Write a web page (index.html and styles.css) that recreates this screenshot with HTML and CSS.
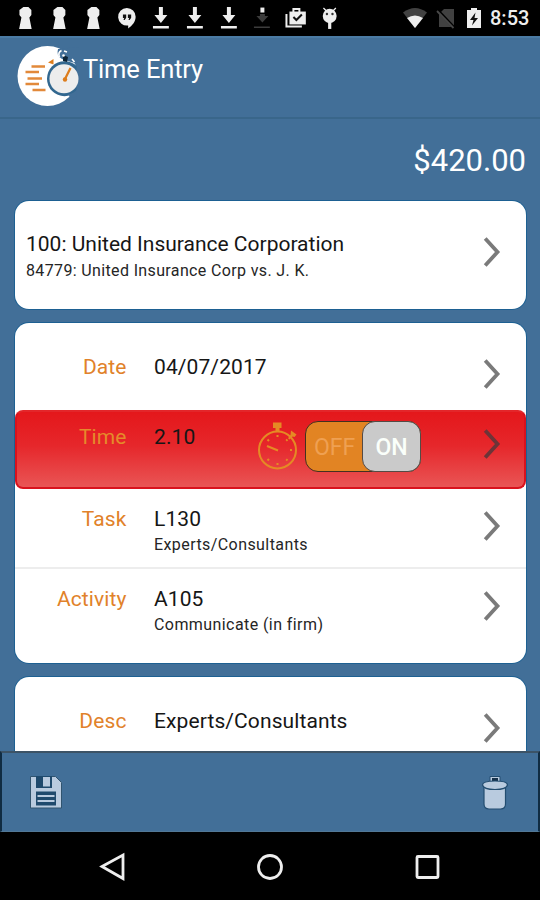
FILE: index.html
```
<!DOCTYPE html>
<html lang="en">
<head>
<meta charset="utf-8">
<title>Time Entry</title>
<link rel="stylesheet" href="styles.css">
</head>
<body>
<svg width="0" height="0" class="defs">
  <defs>
    <symbol id="keyhole" viewBox="0 0 34 36"><path fill="#eee" d="M14.500 7h5l3 3v5l-2 2.500 2.300 11.500h-12.600l2.300-11.500-2-2.500v-5z"/></symbol>
    <symbol id="download" viewBox="0 0 34 36"><path fill="#eee" d="M15 7h4v8h4.500L17 23l-6.500-8H15zM9 26h16v2.500H9z"/></symbol>
    <symbol id="chevron" viewBox="0 0 18 32"><path d="M2.200 2.500 14.500 16 2.200 29.500" fill="none" stroke="currentColor" stroke-width="3.800"/></symbol>
  </defs>
</svg>
<div class="screen">
  <div class="status">
    <div class="notices">
      <svg><use href="#keyhole"/></svg>
      <svg><use href="#keyhole"/></svg>
      <svg><use href="#keyhole"/></svg>
      <svg viewBox="0 0 34 36"><path fill="#eee" d="M17 8a8.800 8.800 0 0 1 8.800 8.800c0 5-3.500 9-7.500 11.700v-3A8.800 8.800 0 1 1 17 8z"/><path fill="#111" d="M13 14.500h3.300v3.300L14.800 20h-1.200l.7-2H13zM18 14.500h3.300v3.300L19.800 20h-1.200l.7-2H18z"/></svg>
      <svg><use href="#download"/></svg>
      <svg><use href="#download"/></svg>
      <svg><use href="#download"/></svg>
      <svg viewBox="0 0 34 36"><path fill="#3c3c3c" d="M14 14h5v2h3.500L16.500 22.500 10.500 16H14zM8 26.500h16V28H8z"/><path fill="#eee" d="M14.500 7.500h4v5h-4z"/></svg>
      <svg viewBox="0 0 34 36"><path fill="none" stroke="#eee" stroke-width="2" d="M7.500 14v12.500H23M14.500 12V9h6v3"/><path fill="#eee" d="M10.500 11.500h16.500v13H10.500z"/><path fill="none" stroke="#111" stroke-width="2" d="m14.500 17 3 3 5.500-5.500"/></svg>
      <svg viewBox="0 0 34 36"><path fill="none" stroke="#eee" stroke-width="1.300" d="m10.500 8 3 3M23 8l-3 3"/><ellipse cx="16.800" cy="16" rx="7" ry="7.200" fill="#eee"/><path fill="#eee" d="M15.200 22h3.200v7h-3.200z"/><circle cx="14" cy="14" r="1.200" fill="#333"/><circle cx="19.600" cy="14" r="1.200" fill="#333"/></svg>
    </div>
    <div class="system">
      <svg class="wifi" viewBox="0 0 26 22"><path fill="#414141" d="M1 5.500q12-9 24 0L13 21z"/><path fill="#eee" d="M5 11q8-5 16 0l-8 10z"/></svg>
      <svg class="sim" viewBox="0 0 20 22"><path fill="#414141" d="M8 2h10v18H3V7z"/><path d="M1 2.500 18 20.500" stroke="#000" stroke-width="3"/><path d="M1 4 17.500 21" stroke="#484848" stroke-width="1.800"/></svg>
      <svg class="battery" viewBox="0 0 14 22"><path fill="#eee" d="M4 1h6v2h4v18H0V3h4z"/><path fill="#111" d="M8.500 5.500 3 13h3.500L5 18.500l6-7.500H7.500z"/></svg>
      <span class="clock">8:53</span>
    </div>
  </div>

  <header class="header">
    <svg class="logo" viewBox="0 0 62 62">
      <circle cx="30.500" cy="31" r="30" fill="#fff"/>
      <path d="M41 4q-2 7 4 10l9 3 8 2V2z" fill="#426f98"/>
      <circle cx="47.500" cy="33.700" r="17.500" fill="#32678f"/>
      <path d="M51 49.500q6-1 10-6l1 8-8 1z" fill="#426f98"/>
      <path d="M62 14v40h-2.500V18z" fill="#426f98"/>
      <path d="M44.500 5.500q-4 2-2 6.500M50 7l-3-1M55 14l2.500 3" stroke="#fff" stroke-width="1.600" fill="none"/>
      <path d="m46 10 5 2-1 5-4-1z" fill="#0b2336"/>
      <circle cx="46.500" cy="10.500" r="1.300" fill="#fff"/>
      <circle cx="47" cy="33.700" r="14.500" fill="#ededed"/>
      <path d="m53.500 23-5.500 11" stroke="#dd7d1c" stroke-width="2.200"/><circle cx="48" cy="34.500" r="2.200" fill="#dd7d1c"/>
      <path d="m31 17.500 5.500-3.500v5.500z" fill="#dd7d1c"/>
      <path d="M14.500 21.500H28M8.500 27H22M10.500 33.500H25M8.500 39H22M15.500 45H28.500" stroke="#e2893a" stroke-width="2.400"/>
    </svg>
    <h1>Time Entry</h1>
  </header>

  <main class="content">
    <div class="total">$420.00</div>
    <section class="card matter">
      <div class="text"><div class="main client">100: United Insurance Corporation</div><div class="sub case">84779: United Insurance Corp vs. J. K.</div></div>
      <svg class="chev"><use href="#chevron"/></svg>
    </section>

    <section class="card details">
      <div class="row date"><div class="label">Date</div><div class="text"><div class="main">04/07/2017</div></div><svg class="chev"><use href="#chevron"/></svg></div>
      <div class="row time">
        <div class="label">Time</div><div class="text"><div class="main">2.10</div></div>
        <svg class="stopwatch" viewBox="0 0 42 50">
          <g fill="none" stroke="#e58a24" stroke-width="2"><circle cx="20.500" cy="29" r="18.500"/><path d="m10 25 11 4.500M20.500 14v2M30.500 18.500l-1.300 1.300M35 29h-2M30.500 39.500l-1.300-1.300M20.500 44v-2M10.500 39.500l1.500-1.500M10.500 18.500l1.500 1.500"/></g>
          <path fill="#e58a24" d="M16 1.500h8.500V7h-2v4h-4V7H16zM34 9.500l5.500 4-2 2.500-2-.5-3 3-1.500-1.200 2.500-3.300z"/>
        </svg>
        <div class="switch"><span class="off">OFF</span><span class="on">ON</span></div>
        <svg class="chev"><use href="#chevron"/></svg>
      </div>
      <div class="row task"><div class="label">Task</div><div class="text"><div class="main">L130</div><div class="sub">Experts/Consultants</div></div><svg class="chev"><use href="#chevron"/></svg></div>
      <div class="row activity"><div class="label">Activity</div><div class="text"><div class="main">A105</div><div class="sub">Communicate (in firm)</div></div><svg class="chev"><use href="#chevron"/></svg></div>
    </section>

    <section class="card desc">
      <div class="row"><div class="label">Desc</div><div class="text"><div class="main">Experts/Consultants</div></div><svg class="chev"><use href="#chevron"/></svg></div>
    </section>
  </main>

  <footer class="toolbar">
    <svg class="save" viewBox="0 0 34 36">
      <path d="M1.500 1.500h25l6 6v25.500h-31z" fill="#b9cbdf" stroke="#31546f"/>
      <path d="M7 1h16v12H7z" fill="#1f4a6d"/><path d="M14 2h7v9.500h-7z" fill="#b9cbdf"/>
      <path d="M7 16.500h20v14H7z" fill="#1f4a6d"/><path d="M8.500 21h17M8.500 26h17" stroke="#b9cbdf" stroke-width="2"/>
    </svg>
    <svg class="trash" viewBox="0 0 28 36">
      <path d="M3 12h21.500v17q0 5-5 5h-11.500q-5 0-5-5z" fill="#b9cbdf" stroke="#234d70" stroke-width="1.200"/>
      <path d="M9 6V1.500h10V6" fill="#b9cbdf" stroke="#234d70"/><path d="M11 3h6v3h-6z" fill="#17324b"/>
      <path d="M1.500 10q0-4 12.500-4t12.500 4q-1 4.500-12.500 4.500T1.500 10z" fill="#b9cbdf" stroke="#234d70" stroke-width="1.200"/>
    </svg>
  </footer>
  <nav class="nav">
    <svg viewBox="0 0 30 30"><path d="M4 14.500 25 3v23.500z"/></svg>
    <svg viewBox="0 0 30 30"><circle cx="15" cy="15" r="11.500"/></svg>
    <svg viewBox="0 0 30 30"><rect x="5" y="4.500" width="21" height="21" rx="1"/></svg>
  </nav>
</div>
</body>
</html>
```
FILE: styles.css
```
* { box-sizing: border-box; }
body { margin: 0; background: #000; font-family: Roboto, "Liberation Sans", sans-serif; }
svg { display: block; flex: none; }
.defs { position: absolute; }
.screen { width: 540px; height: 900px; display: flex; flex-direction: column; overflow: hidden; background: #426f98; }
.status { height: 36px; flex: none; background: #000; display: flex; justify-content: space-between; }
.notices { display: flex; padding-left: 9px; }
.notices svg { width: 33.8px; height: 36px; }
.system { display: flex; align-items: center; padding-right: 11px; }
.wifi { width: 26px; height: 22px; margin-right: 8px; }
.sim { width: 20px; height: 22px; margin-right: 11px; }
.battery { width: 14px; height: 22px; margin-right: 9px; }
.clock { color: #eee; font-size: 20px; font-weight: 500; line-height: 38px; width: 39px; white-space: nowrap; }
.header { height: 83px; flex: none; border-top: 2px solid #4b7ba3; border-bottom: 2px solid #39668a; display: flex; padding: 7px 0 0 17px; }
.logo { width: 62px; height: 62px; }
.header h1 { margin: 6px 0 0 4px; font-size: 25.500px; line-height: 36px; font-weight: 400; color: #fff; letter-spacing: -.15px; }
.content { flex: 1; min-height: 0; overflow: hidden; padding: 0 14px 0 14.500px; }
.total { height: 82px; line-height: 84px; text-align: right; color: #fff; font-size: 31px; }
.card { background: #fff; border-radius: 14px; margin-bottom: 14px; box-shadow: 0 0 0 1px #1d6092; }
.matter { height: 108px; display: flex; padding: 30px 25px 0 11.500px; }
.text { flex: 1; color: #161616; white-space: nowrap; }
.main { font-size: 21px; line-height: 28px; letter-spacing: .1px; }
.main.client { letter-spacing: 0; line-height: 27px; margin-bottom: 1px; }
.sub { font-size: 16px; line-height: 24px; letter-spacing: .42px; color: #252525; }
.sub.case { letter-spacing: .36px; }
.chev { width: 18px; height: 32px; color: #7a7a7a; margin-top: 5px; }
.row { display: flex; padding: 0 25px 0 0; }
.label { width: 112px; margin-right: 27.500px; text-align: right; color: #e1822a; font-size: 21px; line-height: 28px; letter-spacing: .1px; }
.details { height: 340px; }
.date { height: 87px; padding-top: 30px; }
.time { height: 79px; padding-top: 11px; border-radius: 8px; border: 2px solid #d9121d; border-top-color: #e3262a; background: linear-gradient(#e4171b, #e6272b 45%, #e95555); padding-right: 23px; }
.time .label { width: 110px; color: #e58a2b; }
.time .chev { color: #6d3438; margin-top: 5px; }
.stopwatch { width: 42px; height: 50px; margin: -2px 6px 0 0; }
.switch { width: 116px; height: 51px; margin: -2px 62px 0 0; border: 1.500px solid #44301f; border-radius: 13px; background: #e28423; display: flex; font-size: 23px; line-height: 51px; text-align: center; }
.off { width: 57px; color: #efa052; }
.on { flex: 1; margin: -1px; border: 1.500px solid #554a44; border-radius: 13px; background: #cacaca; color: #fafffa; font-weight: 500; }
.task { height: 80px; padding-top: 16px; border-bottom: 2px solid #ededed; }
.activity { padding-top: 16px; }
.desc { height: 120px; padding-top: 30px; margin: 0; }
.toolbar { height: 81px; flex: none; border: 2px solid #102c42; border-top-color: #3c5366; border-bottom: 1px solid #527896; display: flex; justify-content: space-between; padding: 22px 29px 0 27px; }
.save { width: 34px; height: 36px; }
.trash { width: 28px; height: 36px; }
.nav { height: 68px; flex: none; background: #000; display: flex; justify-content: space-between; padding: 20px 98px 0; }
.nav svg { width: 30px; height: 30px; fill: none; stroke: #eee; stroke-width: 2.800; }
```
